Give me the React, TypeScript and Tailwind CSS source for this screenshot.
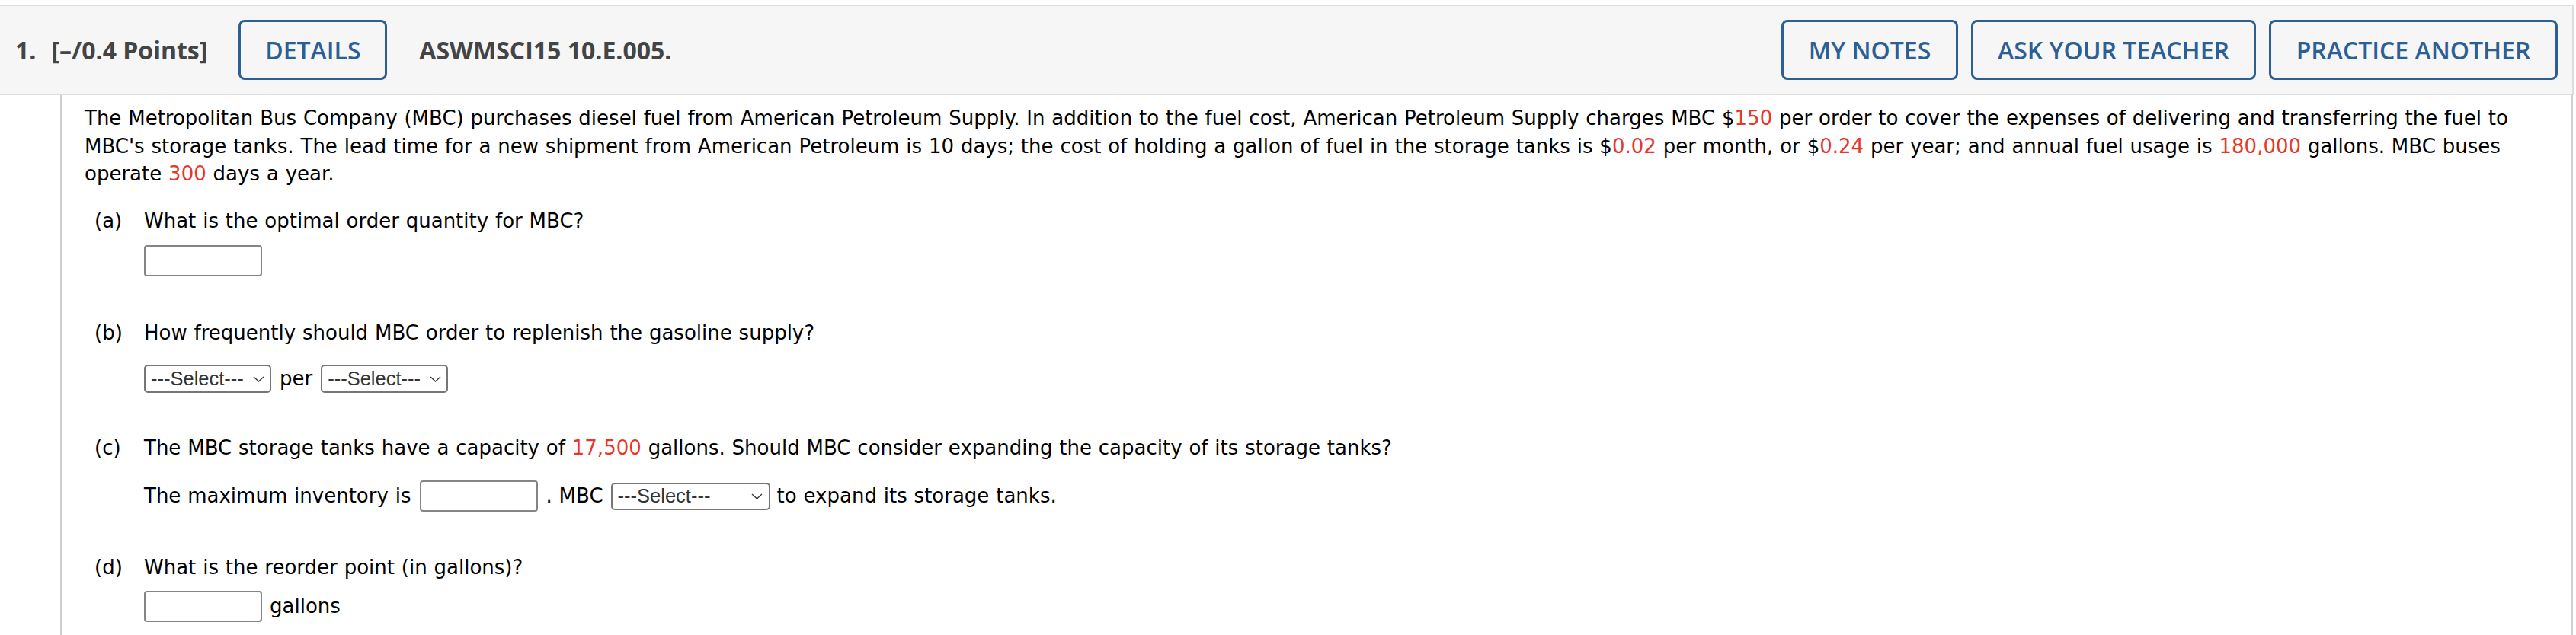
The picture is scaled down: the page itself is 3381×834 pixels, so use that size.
import React from "react";

const RED = "text-[#e8372a]";

function Chevron() {
  return (
    <svg width="15" height="8" viewBox="0 0 15 8" fill="none">
      <path d="M1 1l6.5 6 6.5-6" stroke="#3a3a3a" strokeWidth="1.4" />
    </svg>
  );
}

function SelectBox({ wide }: { wide?: boolean }) {
  return (
    <div
      className={
        (wide ? "w-[209px] h-[36px] pr-[8px]" : "w-[167px] h-[37px] pr-[7px]") +
        " shrink-0 flex items-center justify-between border-2 border-[#767676] rounded-[5px] bg-white pl-[7px] text-[25.5px] leading-none text-[#333] [word-spacing:0px] [font-family:'Liberation_Sans',Arial,sans-serif]"
      }
    >
      <span>---Select---</span>
      <Chevron />
    </div>
  );
}

function InputBox() {
  return <div className="w-[155px] h-[41px] shrink-0 border-2 border-[#858585] rounded-[4px] bg-white" />;
}

function Btn({ w, children }: { w: string; children: React.ReactNode }) {
  return (
    <div
      className={
        w +
        " h-[79px] shrink-0 flex items-center justify-center border-[3px] border-[#2c5f94] rounded-[8px] text-[#2c5f94] text-[32px] font-semibold"
      }
    >
      {children}
    </div>
  );
}

export default function App() {
  return (
    <div className="w-full h-[834px] bg-white overflow-hidden pt-[6px]">
      <div className="w-[3378px]">
        {/* header */}
        <div className="h-[119px] flex items-center bg-[#f6f6f6] border-t-2 border-b-2 border-r-2 border-[#dddddd] pl-[20px] pr-[19px] [font-family:'Open_Sans',sans-serif] whitespace-nowrap">
          <span className="text-[32px] font-bold text-[#444]">1.</span>
          <span className="ml-[20px] text-[32px] font-bold text-[#444]">[–/0.4 Points]</span>
          <div className="ml-[41px]">
            <Btn w="w-[195px]">DETAILS</Btn>
          </div>
          <span className="ml-[42px] text-[32px] font-bold text-[#444]">ASWMSCI15 10.E.005.</span>
          <div className="ml-auto flex gap-[17px]">
            <Btn w="w-[232px]">MY NOTES</Btn>
            <Btn w="w-[374px]">ASK YOUR TEACHER</Btn>
            <Btn w="w-[379px]">PRACTICE ANOTHER</Btn>
          </div>
        </div>

        {/* body */}
        <div className="ml-[79px] mr-[1px] h-[710px] border-l-2 border-r-2 border-[#cfcfcf] pl-[30px] pr-[40px] pt-[12px] text-[26px] leading-[36.5px] text-black [word-spacing:0.6px] [font-family:'DejaVu_Sans',Verdana,sans-serif]">
          <p>
            The Metropolitan Bus Company (MBC) purchases diesel fuel from American Petroleum Supply. In addition to the
            fuel cost, American Petroleum Supply charges MBC $<span className={RED}>150</span> per order to cover the
            expenses of delivering and transferring the fuel to MBC's storage tanks. The lead time for a new shipment
            from American Petroleum is 10 days; the cost of holding a gallon of fuel in the storage tanks is $
            <span className={RED}>0.02</span> per month, or $<span className={RED}>0.24</span> per year; and annual fuel
            usage is <span className={RED}>180,000</span> gallons. MBC buses operate <span className={RED}>300</span> days
            a year.
          </p>

          {/* (a) */}
          <div className="mt-[25.5px] flex pl-[13px]">
            <span className="w-[65px] shrink-0">(a)</span>
            <span>What is the optimal order quantity for MBC?</span>
          </div>
          <div className="mt-[13.5px] pl-[78px] flex">
            <InputBox />
          </div>

          {/* (b) */}
          <div className="mt-[56px] flex pl-[13px]">
            <span className="w-[65px] shrink-0">(b)</span>
            <span>How frequently should MBC order to replenish the gasoline supply?</span>
          </div>
          <div className="mt-[23.5px] pl-[78px] flex items-center h-[37px]">
            <SelectBox />
            <span className="ml-[11px] mr-[11px]">per</span>
            <SelectBox />
          </div>

          {/* (c) */}
          <div className="mt-[54px] flex pl-[13px]">
            <span className="w-[65px] shrink-0">(c)</span>
            <span>
              The MBC storage tanks have a capacity of <span className={RED}>17,500</span> gallons. Should MBC consider
              expanding the capacity of its storage tanks?
            </span>
          </div>
          <div className="mt-[24.5px] pl-[78px] flex items-center h-[41px] whitespace-nowrap">
            <span>The maximum inventory is</span>
            <div className="ml-[12px]">
              <InputBox />
            </div>
            <span className="ml-[10px]">. MBC</span>
            <div className="ml-[10px]">
              <SelectBox wide />
            </div>
            <span className="ml-[9px]">to expand its storage tanks.</span>
          </div>

          {/* (d) */}
          <div className="mt-[55px] flex pl-[13px]">
            <span className="w-[65px] shrink-0">(d)</span>
            <span>What is the reorder point (in gallons)?</span>
          </div>
          <div className="mt-[12.5px] pl-[78px] flex items-center h-[41px]">
            <InputBox />
            <span className="ml-[10px]">gallons</span>
          </div>
        </div>
      </div>
    </div>
  );
}
